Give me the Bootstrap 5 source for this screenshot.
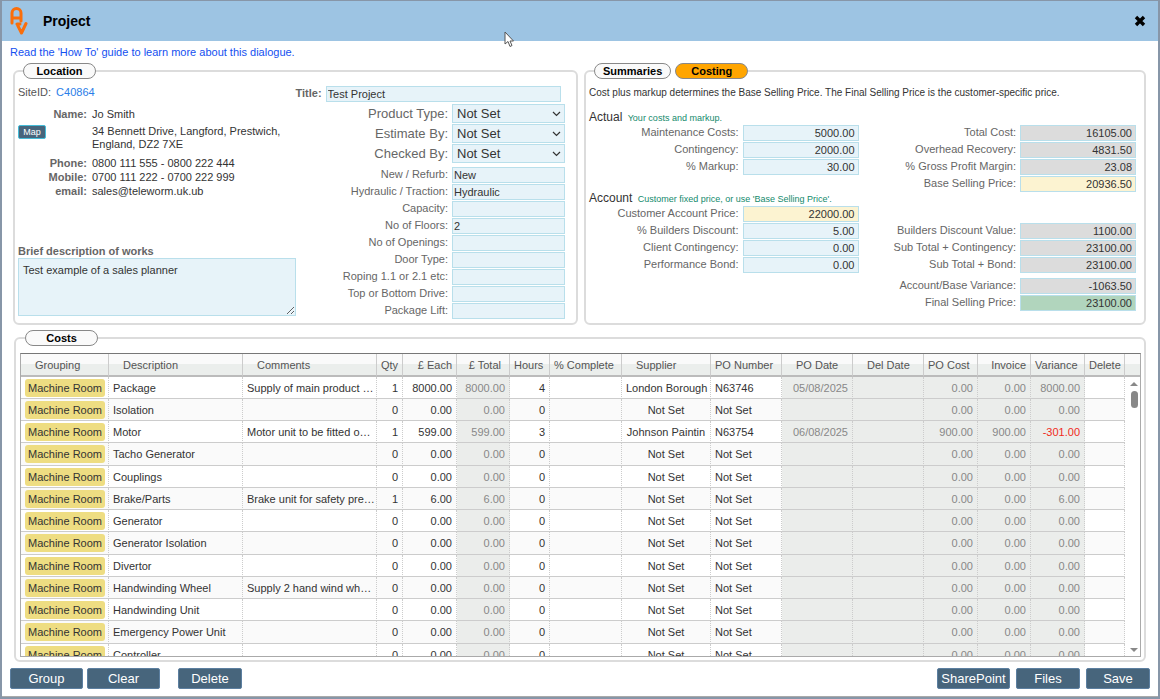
<!DOCTYPE html>
<html lang="en">
<head>
<meta charset="utf-8">
<meta name="viewport" content="width=device-width, initial-scale=1">
<title>Project</title>
<link href="https://cdn.jsdelivr.net/npm/bootstrap@5.3.0/dist/css/bootstrap.min.css" rel="stylesheet">
<style>
body{font-family:"Liberation Sans",Arial,sans-serif;font-size:11px;line-height:14px;color:#333;background:#8796a8;padding:1px 2px 2px}
.dialog{height:calc(100vh - 3px);background:#fff;border-bottom:1px solid #aaa}
.titlebar{height:40px;background:#9dc4e3;color:#000;padding:0 11px 0 7px}
.titlebar h1{font-size:14px;line-height:20px;font-weight:bold;margin:0 0 0 13px}
.closer{border:0;background:none;padding:0;width:14px;height:14px;line-height:0}
.pointer{left:502px;top:30px}
.guide{height:22px;line-height:22px;padding-left:8px}
.guide a{color:#1450f0;text-decoration:none}
.panels{padding:0 12px 0 11px;gap:6px}
.panel{border:2px solid #dcdcdc;border-radius:6px;padding:0 11px 3px 3px;flex:1 1 0;min-width:0}
.panel.figures{padding-right:8px}
.panel legend{float:none;width:auto;margin:0 0 0 5px;padding:0;line-height:16px;font-size:11px;display:flex;gap:4px}
.pill{height:16px;min-width:73px;padding:0 8px;border:1px solid #888;border-radius:8px;background:#fafafa;color:#000;font-weight:bold;font-size:11px;line-height:14px;text-align:center}
.pill.on{background:#ffa500}
.half{flex:1 1 0;min-width:0}
.half.wider{flex-basis:8px}
.site{color:#555;margin-top:5px;line-height:16px}
.site a{color:#2a7de8;text-decoration:none;margin-left:2px}
.contact{display:grid;grid-template-columns:28px 41px 1fr;column-gap:0;margin:7px 0 0}
.contact dt{grid-column:2;text-align:right;color:#666;font-weight:bold;margin:0}
.contact dd{grid-column:3;margin:0 0 0 5px}
.contact .address{line-height:13px;margin-top:4px;margin-bottom:5px}
.mapper{grid-column:1;grid-row:2;height:14px;margin-top:4px;padding:0;border:1px solid #45bcd8;border-radius:2px;background:#47657c;color:#fff;font-size:9px;line-height:11px}
.strong-label{font-weight:bold;color:#666}
.field{background:#e7f3f9;border:1px solid #b9dfeb;border-radius:0;height:16px;padding:0 1px;color:#333;font-size:11px;line-height:14px;min-width:0;outline:0}
.title-row{margin:7px 0 2px}
.entry{display:flex;justify-content:flex-end;gap:4px;margin-bottom:1px;color:#666}
.entry .field{width:113px;flex:none}
.entry.pick{font-size:13px;line-height:19px}
.entry.pick .field{height:19px;font-size:13px;line-height:17px;padding:0 4px;appearance:none;background:#e7f3f9 url("data:image/svg+xml,%3Csvg xmlns='http://www.w3.org/2000/svg' width='9' height='6'%3E%3Cpath d='M1 1l3.5 3.500L8 1' fill='none' stroke='%23333' stroke-width='1.200'/%3E%3C/svg%3E") no-repeat right 3px center}
.money .field{width:116px;text-align:right;padding-right:3px}
.money .calc{background:#dcdcdc}
.money .cream{background:#fcf3d1}
.money .green{background:#b1d5bd}
textarea.field{display:block;width:100%;height:58px;padding:4px;resize:vertical}
.heading{font-size:12px;line-height:15px;height:15px;margin:0}
.heading span{font-size:9px;color:#148a6c;margin-left:2px}
.blurb{font-size:10px;margin:7px 0 10px;white-space:nowrap}
.costs{margin:5px 12px 0 12px;padding:0 3px 3px 4px;display:flex;flex-direction:column;min-height:0}
.gridbox{border:1px solid #aaa;border-top-color:#777;overflow:hidden;min-height:0;flex:1 1 0;margin-top:7px;position:relative}
.ledger{width:100%;table-layout:fixed;border-collapse:separate;border-spacing:0;white-space:nowrap}
.ledger th{height:23px;padding:0 4px;font-weight:normal;color:#555;background:linear-gradient(#fafafa 50%,#ebeeec 50%);border-right:1px solid #ccc;border-bottom:2px solid #bbb;box-sizing:border-box}
.ledger th.in{padding-left:14px}
.ledger td{height:22px;padding:0 4px;border-right:1px dotted #ccc;border-bottom:1px solid #ccc;overflow:hidden;line-height:14px}
.ledger tr:nth-child(4n) td{height:23px}
.ledger tr:nth-child(even) td{background:#fafafa}
.ledger td.calc,.ledger tr:nth-child(even) td.calc{background:#ebedeb;color:#888}
.ledger td.minus{color:#f02a1c!important}
.ledger td.comment{padding-right:0}
.ledger td.supplier{text-align:center}
.ledger td:last-child,.ledger tr:nth-child(even) td:last-child{border:0;background:#fff}
.chip{display:block;height:18px;line-height:18px;border-radius:3px;background:#eedd82;text-align:center;margin-right:-1px}
.scroller{right:0;top:24px;bottom:0;width:12px;color:#888;padding:4px 0}
.thumb{width:7px;height:17px;border-radius:4px;background:#888;margin-top:5px}
.actions{padding:6px 8px 7px;gap:4px}
.act{width:73px;height:21px;padding:0;border:1px solid #5c7fa0;border-radius:2px;background:#47657c;color:#fff;font-size:13px;line-height:19px}
.act.slim{width:64px}
.act.gap-before{margin-left:14px}
.right-acts{gap:6px}
</style>
</head>
<body>
<main class="dialog d-flex flex-column position-relative">
<header class="titlebar d-flex align-items-center">
<svg width="21" height="28" viewBox="9 8 21 28" fill="none" stroke="#fa6e0a" stroke-width="3" stroke-linecap="round" stroke-linejoin="round" aria-hidden="true"><path d="M12 24V14a4.500 4.500 0 0 1 9 0V22M12 19H21M17 25L21.500 34L26 24.500M17 25H20"/></svg>
<h1>Project</h1>
<button class="closer ms-auto" aria-label="Close"><svg width="12" height="12" viewBox="0 0 12 12" stroke="#000" stroke-width="3.400"><path d="M2 2L10 10M10 2L2 10"/></svg></button>
</header>
<svg class="pointer position-absolute" width="11" height="17" viewBox="0 0 11 17" aria-hidden="true"><path d="M1 1V13L4 10.500L6 15.500L8 14.500L6 10H9.500Z" fill="#fff" stroke="#555"/></svg>
<div class="guide"><a href="#">Read the 'How To' guide to learn more about this dialogue.</a></div>

<div class="panels d-flex">
<fieldset class="panel">
<legend><span class="pill">Location</span></legend>
<div class="d-flex">
<div class="half wider d-flex flex-column">
<div class="site">SiteID: <a href="#">C40864</a></div>
<dl class="contact">
<dt>Name:</dt><dd>Jo Smith</dd>
<button class="mapper">Map</button>
<dd class="address">34 Bennett Drive, Langford, Prestwich,<br>England, DZ2 7XE</dd>
<dt>Phone:</dt><dd>0800 111 555 - 0800 222 444</dd>
<dt>Mobile:</dt><dd>0700 111 222 - 0700 222 999</dd>
<dt>email:</dt><dd>sales@teleworm.uk.ub</dd>
</dl>
<label class="strong-label mt-auto" for="works">Brief description of works</label>
<textarea class="field mb-1" id="works">Test example of a sales planner</textarea>
</div>
<div class="half">
<div class="title-row d-flex justify-content-end gap-1 pe-1"><label class="strong-label" for="title">Title:</label><input class="field flex-grow-1" id="title" value="Test Project"></div>
<div class="entry pick"><label for="ptype">Product Type:</label><select class="field" id="ptype"><option>Not Set</option></select></div>
<div class="entry pick"><label for="est">Estimate By:</label><select class="field" id="est"><option>Not Set</option></select></div>
<div class="entry pick mb-1"><label for="chk">Checked By:</label><select class="field" id="chk"><option>Not Set</option></select></div>
<div class="entry"><label for="f1">New / Refurb:</label><input class="field" id="f1" value="New"></div>
<div class="entry"><label for="f2">Hydraulic / Traction:</label><input class="field" id="f2" value="Hydraulic"></div>
<div class="entry"><label for="f3">Capacity:</label><input class="field" id="f3"></div>
<div class="entry"><label for="f4">No of Floors:</label><input class="field" id="f4" value="2"></div>
<div class="entry"><label for="f5">No of Openings:</label><input class="field" id="f5"></div>
<div class="entry"><label for="f6">Door Type:</label><input class="field" id="f6"></div>
<div class="entry"><label for="f7">Roping 1.1 or 2.1 etc:</label><input class="field" id="f7"></div>
<div class="entry"><label for="f8">Top or Bottom Drive:</label><input class="field" id="f8"></div>
<div class="entry"><label for="f9">Package Lift:</label><input class="field" id="f9"></div>
</div>
</div>
</fieldset>

<fieldset class="panel figures">
<legend><button class="pill">Summaries</button><button class="pill on">Costing</button></legend>
<p class="blurb">Cost plus markup determines the Base Selling Price. The Final Selling Price is the customer-specific price.</p>
<div class="d-flex money">
<div class="half">
<h2 class="heading">Actual <span>Your costs and markup.</span></h2>
<div class="entry"><label for="m1">Maintenance Costs:</label><input class="field" id="m1" value="5000.00"></div>
<div class="entry"><label for="m2">Contingency:</label><input class="field" id="m2" value="2000.00"></div>
<div class="entry"><label for="m3">% Markup:</label><input class="field" id="m3" value="30.00"></div>
<h2 class="heading mt-3">Account <span>Customer fixed price, or use 'Base Selling Price'.</span></h2>
<div class="entry"><label for="m4">Customer Account Price:</label><input class="field cream" id="m4" value="22000.00"></div>
<div class="entry"><label for="m5">% Builders Discount:</label><input class="field" id="m5" value="5.00"></div>
<div class="entry"><label for="m6">Client Contingency:</label><input class="field" id="m6" value="0.00"></div>
<div class="entry"><label for="m7">Performance Bond:</label><input class="field" id="m7" value="0.00"></div>
</div>
<div class="half wider">
<div class="heading"></div>
<div class="entry"><label for="t1">Total Cost:</label><input class="field calc" id="t1" value="16105.00" readonly></div>
<div class="entry"><label for="t2">Overhead Recovery:</label><input class="field calc" id="t2" value="4831.50" readonly></div>
<div class="entry"><label for="t3">% Gross Profit Margin:</label><input class="field calc" id="t3" value="23.08" readonly></div>
<div class="entry"><label for="t4">Base Selling Price:</label><input class="field cream" id="t4" value="20936.50" readonly></div>
<div class="heading mt-3"></div>
<div class="entry"><label for="t5">Builders Discount Value:</label><input class="field calc" id="t5" value="1100.00" readonly></div>
<div class="entry"><label for="t6">Sub Total + Contingency:</label><input class="field calc" id="t6" value="23100.00" readonly></div>
<div class="entry"><label for="t7">Sub Total + Bond:</label><input class="field calc" id="t7" value="23100.00" readonly></div>
<div class="entry pt-1"><label for="t8">Account/Base Variance:</label><input class="field calc" id="t8" value="-1063.50" readonly></div>
<div class="entry"><label for="t9">Final Selling Price:</label><input class="field green" id="t9" value="23100.00" readonly></div>
</div>
</div>
</fieldset>
</div>

<fieldset class="panel costs">
<legend><span class="pill">Costs</span></legend>
<div class="gridbox">
<table class="ledger">
<colgroup id="cols"></colgroup>
<thead><tr><th class="in">Grouping</th><th class="in">Description</th><th class="in">Comments</th><th>Qty</th><th class="text-end">£ Each</th><th class="text-end pe-2">£ Total</th><th>Hours</th><th>% Complete</th><th class="in">Supplier</th><th>PO Number</th><th class="in">PO Date</th><th class="in">Del Date</th><th>PO Cost</th><th class="text-end">Invoice</th><th>Variance</th><th>Delete</th><th></th></tr></thead>
<tbody id="rows"></tbody>
</table>
<div class="scroller position-absolute d-flex flex-column align-items-center" aria-hidden="true">
<svg width="8" height="4"><path d="M0 4L4 0L8 4Z" fill="#888"/></svg>
<div class="thumb"></div>
<svg class="mt-auto" width="8" height="4"><path d="M0 0L4 4L8 0Z" fill="#888"/></svg>
</div>
</div>
</fieldset>

<footer class="actions d-flex">
<button class="act">Group</button><button class="act">Clear</button><button class="act slim gap-before">Delete</button>
<div class="right-acts d-flex ms-auto"><button class="act">SharePoint</button><button class="act slim">Files</button><button class="act slim">Save</button></div>
</footer>
</main>
<script src="https://cdn.jsdelivr.net/npm/bootstrap@5.3.0/dist/js/bootstrap.bundle.min.js"></script>
<script>
const widths = [88,134,134,26,54,53,40,72,89,71,71,71,54,53,54,40,16];
document.getElementById('cols').innerHTML = widths.map(w => `<col style="width:${w}px">`).join('');
// description, comment, qty, each, hours, supplier, PO number, PO date, PO cost, variance
const items = [
  ['Package','Supply of main product …','1','8000.00','4','London Borough','N63746','05/08/2025','0.00','8000.00'],
  ['Isolation'],
  ['Motor','Motor unit to be fitted o…','1','599.00','3','Johnson Paintin','N63754','06/08/2025','900.00','-301.00'],
  ['Tacho Generator'],['Couplings'],
  ['Brake/Parts','Brake unit for safety pre…','1','6.00','0','Not Set','Not Set','','0.00','6.00'],
  ['Generator'],['Generator Isolation'],['Divertor'],
  ['Handwinding Wheel','Supply 2 hand wind wh…'],
  ['Handwinding Unit'],['Emergency Power Unit'],['Controller']
];
document.getElementById('rows').innerHTML = items.map(i => {
  const [d, c='', q='0', e='0.00', h='0', s='Not Set', n='Not Set', date='', cost='0.00', v='0.00'] = i;
  return `<tr><td><span class="chip">Machine Room</span></td><td>${d}</td><td class="comment">${c}</td>
  <td class="text-end">${q}</td><td class="text-end">${e}</td><td class="calc text-end">${e}</td><td class="text-end">${h}</td><td></td>
  <td class="supplier">${s}</td><td>${n}</td><td class="calc text-end">${date}</td><td class="calc"></td>
  <td class="calc text-end">${cost}</td><td class="calc text-end">${cost}</td><td class="calc text-end${v[0]==='-'?' minus':''}">${v}</td><td></td><td></td></tr>`;
}).join('');
</script>
</body>
</html>
